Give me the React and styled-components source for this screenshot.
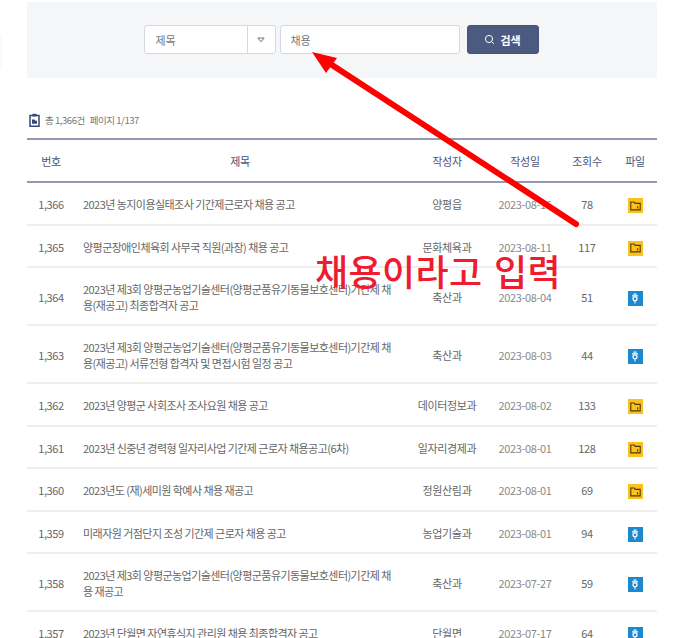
import styled, { createGlobalStyle } from 'styled-components';

const GlobalStyle = createGlobalStyle`
  html, body {
    margin: 0;
    padding: 0;
    background: #fff;
    overflow: hidden;
  }
  body {
    font-family: "Noto Sans CJK KR", "Noto Sans", sans-serif;
    color: #555;
  }
`;

const rows = [
  { no: '1,366', title: '2023년 농지이용실태조사 기간제근로자 채용 공고', dept: '양평읍', date: '2023-08-16', hits: 78, file: 'folder' },
  { no: '1,365', title: '양평군장애인체육회 사무국 직원(과장) 채용 공고', dept: '문화체육과', date: '2023-08-11', hits: 117, file: 'folder' },
  { no: '1,364', title: '2023년 제3회 양평군농업기술센터(양평군품유기동물보호센터)기간제 채용(재공고) 최종합격자  공고', dept: '축산과', date: '2023-08-04', hits: 51, file: 'hwp' },
  { no: '1,363', title: '2023년 제3회 양평군농업기술센터(양평군품유기동물보호센터)기간제 채용(재공고) 서류전형 합격자 및 면접시험 일정 공고', dept: '축산과', date: '2023-08-03', hits: 44, file: 'hwp' },
  { no: '1,362', title: '2023년 양평군 사회조사 조사요원 채용 공고', dept: '데이터정보과', date: '2023-08-02', hits: 133, file: 'folder' },
  { no: '1,361', title: '2023년 신중년 경력형 일자리사업 기간제 근로자 채용공고(6차)', dept: '일자리경제과', date: '2023-08-01', hits: 128, file: 'folder' },
  { no: '1,360', title: '2023년도 (재)세미원 학예사 채용 재공고', dept: '정원산림과', date: '2023-08-01', hits: 69, file: 'folder' },
  { no: '1,359', title: '미래자원 거점단지 조성 기간제 근로자 채용 공고', dept: '농업기술과', date: '2023-08-01', hits: 94, file: 'hwp' },
  { no: '1,358', title: '2023년 제3회 양평군농업기술센터(양평군품유기동물보호센터)기간제 채용 재공고', dept: '축산과', date: '2023-07-27', hits: 59, file: 'hwp' },
  { no: '1,357', title: '2023년 단월면 자연휴식지 관리원 채용 최종합격자 공고', dept: '단월면', date: '2023-07-17', hits: 64, file: 'hwp' },
];

const FolderIcon = () => (
  <svg width="11" height="10" viewBox="0 0 11 10" fill="none" stroke="#4a3a10" strokeWidth="1.1">
    <path d="M.8 8.9V1h3.4l1 1.4h5v6.5z" />
    <path d="M7.6 5.2v2.2" />
  </svg>
);

const HwpIcon = () => (
  <svg width="8" height="11" viewBox="0 0 8 11" fill="none" stroke="#fff" strokeWidth="1.3">
    <path d="M2.5 1.2h3M1 2.8h6" />
    <circle cx="4" cy="5.8" r="2" />
    <path d="M4 8v2.4" stroke="#cfe8f7" />
  </svg>
);

const App = () => {
  return (
    <Page>
      <GlobalStyle />
      <EdgeCard />
      <SearchPanel>
        <SelectBox>
          <SelectLabel>제목</SelectLabel>
          <SelectArrow>
            <svg width="8" height="6" viewBox="0 0 8 6" fill="none" stroke="#66708c" strokeWidth="1">
              <path d="M.8 1h6.4L4 4.8z" />
            </svg>
          </SelectArrow>
        </SelectBox>
        <SearchInput>채용</SearchInput>
        <SearchButton>
          <svg width="11" height="11" viewBox="0 0 11 11" fill="none" stroke="#fff" strokeWidth="1">
            <circle cx="5" cy="5" r="3.6" />
            <path d="M7.7 7.7l2.2 2.2" />
          </svg>
          검색
        </SearchButton>
      </SearchPanel>

      <Summary>
        <svg width="11" height="14" viewBox="0 0 11 14" fill="none">
          <path d="M1 2.5h9v10.7H1z" stroke="#37477a" strokeWidth="1.5" />
          <path d="M3.4.8h4.2v2.6H3.4z" fill="#37477a" />
          <path d="M3 6.5h2.5l1 1.2H8v3H3z" fill="#37477a" />
        </svg>
        <span>총 1,366건</span>
        <span>페이지 1/137</span>
      </Summary>

      <Table>
        <colgroup>
          <col width="48" />
          <col width="330" />
          <col width="84" />
          <col width="72" />
          <col width="52" />
          <col width="44" />
        </colgroup>
        <thead>
          <tr>
            <Th>번호</Th>
            <Th>제목</Th>
            <Th>작성자</Th>
            <Th>작성일</Th>
            <Th>조회수</Th>
            <Th>파일</Th>
          </tr>
        </thead>
        <tbody>
          {rows.map((row) => (
            <tr key={row.no}>
              <Td>{row.no}</Td>
              <TitleCell>{row.title}</TitleCell>
              <Td>{row.dept}</Td>
              <DateCell>{row.date}</DateCell>
              <Td>{row.hits}</Td>
              <Td>
                <FileBadge $kind={row.file}>
                  {row.file === 'folder' ? <FolderIcon /> : <HwpIcon />}
                </FileBadge>
              </Td>
            </tr>
          ))}
        </tbody>
      </Table>

      <ArrowMark width="690" height="638" viewBox="0 0 690 638">
        <path d="M576 224L332 65" stroke="#fe0000" strokeWidth="6" strokeLinecap="round" />
        <path d="M312 52L337 58L326 73z" fill="#fe0000" />
      </ArrowMark>
      <Annotation>채용이라고 입력</Annotation>
    </Page>
  );
};

const Page = styled.div`
  position: relative;
  width: 690px;
  height: 638px;
  overflow: hidden;
  padding: 2px 33px 0 27px;
  box-sizing: border-box;
`;

const EdgeCard = styled.div`
  position: absolute;
  left: -10px;
  top: 36px;
  width: 12px;
  height: 34px;
  border-radius: 3px;
  background: #fafafa;
`;

const SearchPanel = styled.div`
  height: 76px;
  background: #f5f6f8;
  display: flex;
  justify-content: center;
  align-items: flex-start;
  padding-top: 23px;
  padding-right: 2px;
  box-sizing: border-box;
`;

const SelectBox = styled.div`
  width: 132px;
  height: 29px;
  box-sizing: border-box;
  display: flex;
  background: #fff;
  border: 1px solid #d5d8e2;
  border-radius: 3px;
  margin-right: 4px;
`;

const SelectLabel = styled.div`
  flex: 1;
  padding-left: 11px;
  font-size: 11px;
  line-height: 28px;
  color: #777;
`;

const SelectArrow = styled.div`
  width: 27px;
  border-left: 1px solid #d5d8e2;
  display: flex;
  align-items: center;
  justify-content: center;
`;

const SearchInput = styled.div`
  width: 180px;
  height: 29px;
  box-sizing: border-box;
  padding-left: 10px;
  background: #fff;
  border: 1px solid #d5d8e2;
  border-radius: 3px;
  font-size: 11px;
  line-height: 28px;
  color: #777;
  margin-right: 7px;
`;

const SearchButton = styled.button`
  width: 72px;
  height: 29px;
  border: 1px solid #475480;
  border-radius: 3px;
  background: #4c5981;
  color: #fff;
  font-family: inherit;
  font-size: 11px;
  font-weight: 700;
  display: flex;
  align-items: center;
  justify-content: center;
  gap: 5px;
  padding: 0;
`;

const Summary = styled.div`
  display: flex;
  align-items: center;
  gap: 5px;
  height: 16px;
  margin-top: 34px;
  padding-left: 2px;
  font-size: 9.5px;
  letter-spacing: -0.45px;
  color: #777;
`;

const Table = styled.table`
  width: 630px;
  margin-top: 10px;
  border-collapse: separate;
  border-spacing: 0;
  table-layout: fixed;
  border-top: 2px solid #9299b5;
  font-size: 11px;
  letter-spacing: -0.35px;
`;

const Th = styled.th`
  box-sizing: border-box;
  height: 43px;
  padding: 0;
  font-weight: 400;
  color: #4a5478;
  text-align: center;
  border-bottom: 2px solid #9299b5;
`;

const Td = styled.td`
  padding: 12.5px 0 10.5px;
  text-align: center;
  color: #666;
  line-height: 16.5px;
  border-bottom: 2px solid #eeeeee;
`;

const TitleCell = styled(Td)`
  padding-left: 8px;
  padding-right: 12px;
  text-align: left;
  letter-spacing: -0.55px;
  word-break: break-all;
`;

const DateCell = styled(Td)`
  color: #8a8a8a;
`;

const FileBadge = styled.span`
  display: inline-flex;
  align-items: center;
  justify-content: center;
  width: 15px;
  height: 15px;
  vertical-align: middle;
  background: ${({ $kind }) => ($kind === 'folder' ? '#fdc11b' : '#1c88cf')};
`;

const ArrowMark = styled.svg`
  position: absolute;
  left: 0;
  top: 0;
  pointer-events: none;
`;

const Annotation = styled.div`
  position: absolute;
  left: 315px;
  top: 245px;
  font-size: 36px;
  line-height: 50px;
  font-weight: 500;
  letter-spacing: 0.4px;
  word-spacing: 3px;
  color: #ed1c2e;
  white-space: nowrap;
`;

export default App;
